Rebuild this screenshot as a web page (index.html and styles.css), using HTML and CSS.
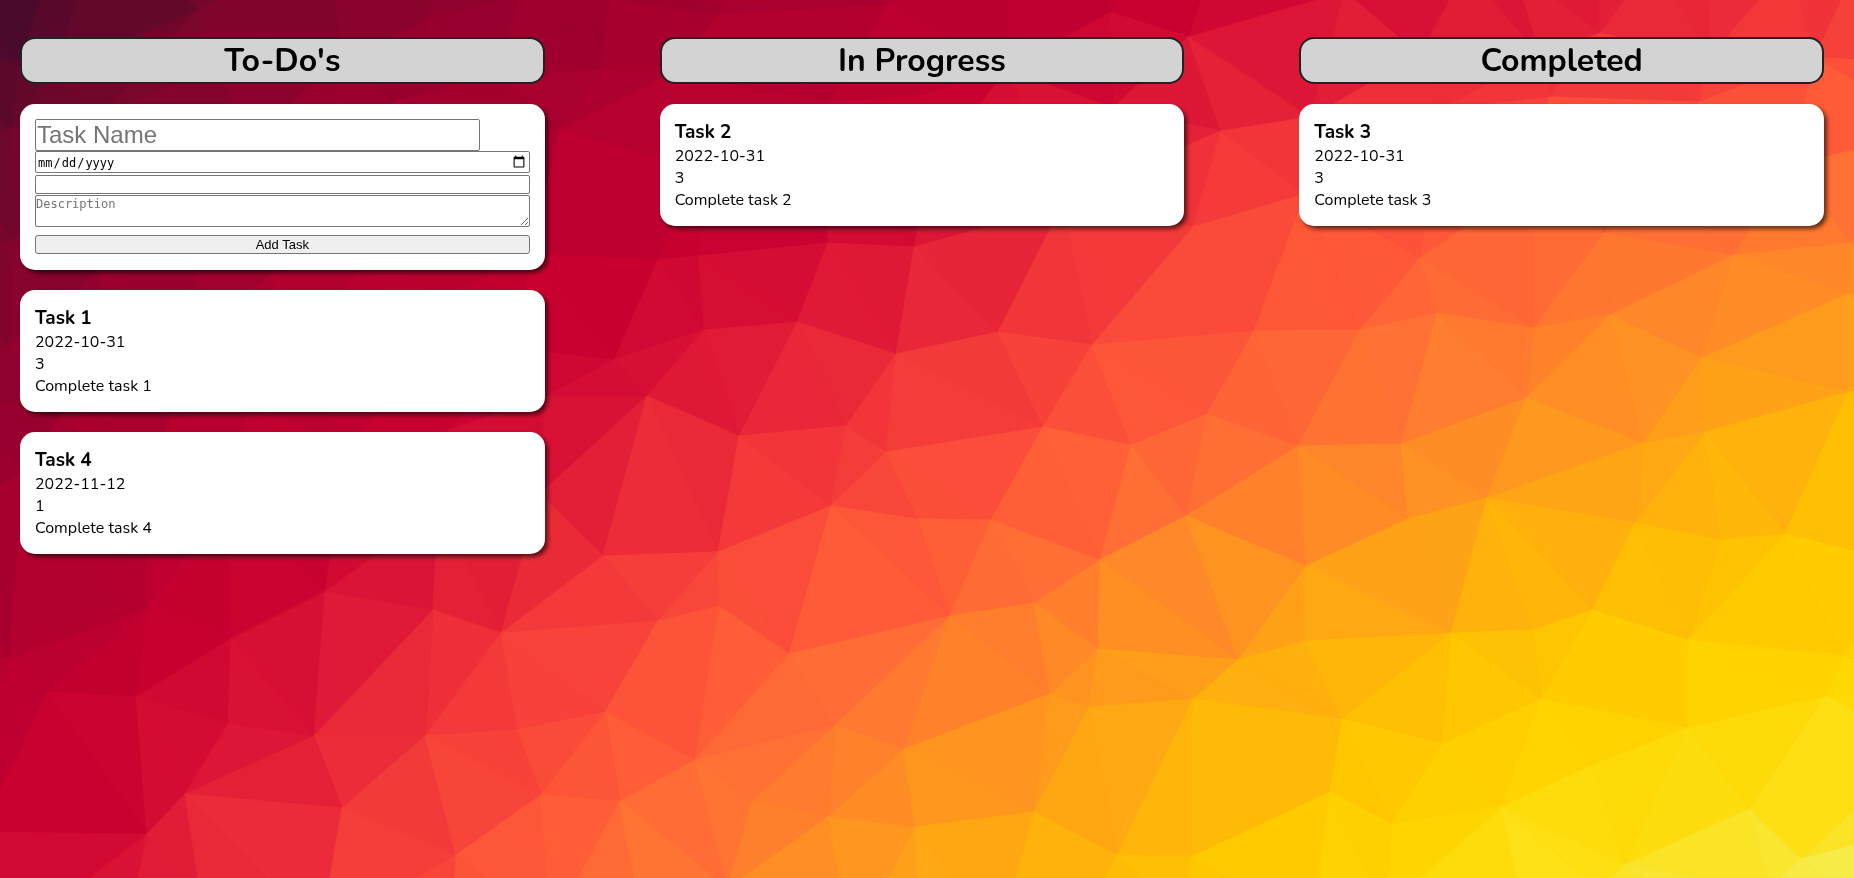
FILE: index.html
```html
<!DOCTYPE html>
<html lang="en">
<head>
<meta charset="utf-8">
<title>Task Board</title>
<link rel="stylesheet" href="styles.css">
</head>
<body>
<svg class="backdrop" id="backdrop" viewBox="0 0 1854 878" preserveAspectRatio="xMidYMid slice" aria-hidden="true"></svg>
<main class="board">
  <section class="column">
    <h2 class="column-title">To-Do's</h2>
    <form class="card task-form">
      <input class="field field-name" type="text" placeholder="Task Name" aria-label="Task name">
      <input class="field field-date" type="date" aria-label="Due date">
      <input class="field field-number" type="number" aria-label="Priority">
      <textarea class="field field-description" placeholder="Description" aria-label="Description"></textarea>
      <button class="add-button" type="button">Add Task</button>
    </form>
    <article class="card">
      <h3 class="task-name">Task 1</h3>
      <p class="task-line">2022-10-31</p>
      <p class="task-line">3</p>
      <p class="task-line">Complete task 1</p>
    </article>
    <article class="card">
      <h3 class="task-name">Task 4</h3>
      <p class="task-line">2022-11-12</p>
      <p class="task-line">1</p>
      <p class="task-line">Complete task 4</p>
    </article>
  </section>
  <section class="column">
    <h2 class="column-title">In Progress</h2>
    <article class="card">
      <h3 class="task-name">Task 2</h3>
      <p class="task-line">2022-10-31</p>
      <p class="task-line">3</p>
      <p class="task-line">Complete task 2</p>
    </article>
  </section>
  <section class="column">
    <h2 class="column-title">Completed</h2>
    <article class="card">
      <h3 class="task-name">Task 3</h3>
      <p class="task-line">2022-10-31</p>
      <p class="task-line">3</p>
      <p class="task-line">Complete task 3</p>
    </article>
  </section>
</main>
<script src="backdrop.js"></script>
</body>
</html>
```
FILE: styles.css
```css
* {
  box-sizing: border-box;
  margin: 0;
  padding: 0;
}

body {
  min-height: 100vh;
  background: #c00031;
  color: #000;
  font-family: Nunito, Lato, "Open Sans", sans-serif;
  font-size: 16px;
}

.backdrop {
  position: fixed;
  inset: 0;
  width: 100%;
  height: 100%;
  z-index: -1;
}

.board {
  display: grid;
  grid-template-columns: repeat(3, 1fr);
  column-gap: 115px;
  align-items: start;
  padding: 37px 30px 20px 20px;
}

.column {
  display: flex;
  flex-direction: column;
  gap: 20px;
}

.column-title {
  border: 2px solid #222;
  border-radius: 15px;
  background: #d3d3d3;
  font-size: 32px;
  font-weight: 700;
  line-height: 43px;
  text-align: center;
}

.card {
  padding: 15px;
  border-radius: 15px;
  background: #fff;
  box-shadow: 3px 3px 4px rgba(0, 0, 0, 0.6);
}

.task-name {
  font-size: 19px;
  font-weight: 700;
  line-height: 26px;
}

.task-line {
  line-height: 22px;
}

.task-form {
  display: flex;
  flex-direction: column;
}

.field {
  width: 100%;
  border: 1px solid #767676;
  border-radius: 2px;
  background: #fff;
  font-family: "Liberation Sans", Arial, sans-serif;
  font-size: 13px;
}

.field::placeholder {
  color: #757575;
}

.field-name {
  width: 90%;
  height: 32px;
  padding: 1px;
  font-size: 24px;
}

.field-date {
  height: 22px;
  padding: 2px 1px 0;
  font-family: "DejaVu Sans Mono", monospace;
  font-size: 12px;
}

.field-date::-webkit-calendar-picker-indicator {
  width: 14px;
  height: 14px;
  margin-bottom: 2px;
}

.field-number {
  height: 19px;
  margin-top: 2px;
}

.field-description {
  height: 32px;
  margin-top: 1px;
  padding-top: 1px;
  font-family: "DejaVu Sans Mono", monospace;
  font-size: 12px;
  resize: both;
}

.add-button {
  height: 19px;
  margin: 8px 0 1px;
  border: 1px solid #767676;
  border-radius: 3px;
  background: #efefef;
  color: #000;
  font-family: "Liberation Sans", Arial, sans-serif;
  font-size: 13px;
  line-height: 15px;
}
```
FILE: backdrop.js
```js
// Low-poly backdrop: triangulates a set of points and shades each facet
// by its place on a colour ramp.
const points = [
  [-90,-70],[60,-60],[100,-70],[330,-50],[470,-60],[620,-50],[750,-60],[890,-80],[1010,-50],[1110,-70],[1220,-60],[1345,-8],[1465,-30],[1515,-30],[1595,-50],[1655,-40],[1710,-40],[1790,-35],[1850,-20],[1950,-60],
  [-80,50],[20,62],[52,75],[198,9],[425,20],[440,-40],[395,102],[520,-8],[610,0],[719,15],[888,5],[1110,12],[1188,37],[1350,-10],[1420,55],[1540,55],[1600,33],[1708,58],[1815,58],[1930,62],
  [-60,150],[12,128],[98,118],[215,65],[250,140],[340,60],[330,190],[500,75],[560,130],[600,70],[670,75],[700,170],[830,103],[825,175],[921,95],[1008,70],[930,165],[1062,206],[1113,108],[1130,170],[1221,131],[1193,227],[1310,117],[1305,194],[1440,110],[1430,200],[1549,97],[1535,180],[1700,102],[1650,190],[1790,165],[1940,130],
  [-70,260],[15,240],[100,270],[180,230],[270,275],[370,250],[440,300],[530,254],[658,260],[699,256],[828,243],[914,247],[1420,258],[1604,233],[1734,255],[1851,243],[1940,280],
  [10,345],[110,360],[210,330],[300,370],[400,380],[520,350],[614,360],[704,330],[797,322],[896,354],[998,332],[1092,345],[1254,331],[1360,330],[1437,313],[1534,328],[1610,315],[1702,358],[1848,294],[1930,380],
  [-70,390],[60,415],[170,420],[250,405],[350,450],[449,430],[545,397],[647,396],[739,436],[846,426],[886,452],[1043,427],[1131,445],[1207,414],[1298,446],[1401,444],[1526,398],[1643,443],[1705,432],[1848,392],
  [-60,530],[25,470],[147,505],[228,500],[340,490],[438,510],[540,494],[603,556],[718,552],[831,506],[918,519],[991,520],[1100,560],[1186,516],[1306,566],[1408,519],[1487,498],[1635,523],[1721,540],[1785,534],[1910,565],
  [-60,645],[9,660],[147,609],[231,639],[325,592],[433,610],[501,633],[658,621],[719,606],[789,654],[950,616],[1034,603],[1098,649],[1238,660],[1305,641],[1451,633],[1532,630],[1592,610],[1688,640],[1844,656],[1940,690],
  [47,692],[136,697],[228,724],[314,736],[425,736],[517,730],[605,712],[695,760],[835,725],[904,749],[1050,694],[1089,707],[1193,699],[1342,719],[1442,744],[1541,699],[1592,765],[1688,728],[1826,696],[1920,750],
  [-20,832],[147,834],[185,794],[342,808],[456,855],[541,795],[620,801],[752,801],[828,817],[915,827],[1034,812],[1117,855],[1191,857],[1330,792],[1392,824],[1501,807],[1625,865],[1749,809],[1801,859],[1930,825],
  [20,930],[125,940],[210,960],[320,935],[450,950],[550,930],[645,940],[728,888],[850,940],[870,915],[920,950],[1000,935],[1085,910],[1192,930],[1310,930],[1385,910],[1530,940],[1600,890],[1745,940],[1770,890],[1900,940]
];

const ramp = [
  "4a0a2b", "78062b", "98002e", "b4002f", "c80030", "dc1436", "ee2f39", "f8443a", "ff5a38",
  "ff7034", "ff8828", "ff9e1a", "ffb40a", "ffc800", "ffd600", "fde015", "f7eb4a"
].map(h => [0, 2, 4].map(i => parseInt(h.slice(i, i + 2), 16)));

// Ramp positions at an even grid over the canvas.
const grid = [
  [0, 1.3, 2.2, 3, 4.3, 5.1, 6.3],
  [1, 2.5, 3.6, 4.8, 7, 8.4, 9.6],
  [2, 3.6, 5.1, 6.8, 8.7, 10.6, 12.2],
  [3, 4.9, 7.2, 9.2, 11.4, 12.9, 13.9],
  [4.2, 6.2, 8.8, 11.3, 13, 15, 16]
];

function shade(x, y) {
  const gx = Math.min(5.999, Math.max(0, x / 309));
  const gy = Math.min(3.999, Math.max(0, y / 219.5));
  const i = Math.floor(gx), j = Math.floor(gy), u = gx - i, v = gy - j;
  const t = (grid[j][i] * (1 - u) + grid[j][i + 1] * u) * (1 - v) +
    (grid[j + 1][i] * (1 - u) + grid[j + 1][i + 1] * u) * v;
  const s = Math.min(15, Math.floor(t)), f = t - s;
  const c = ramp[s].map((a, k) => Math.round(a + (ramp[s + 1][k] - a) * f));
  return `rgb(${c.join(",")})`;
}

function circle(a, b, c, pts) {
  const [ax, ay] = pts[a], [bx, by] = pts[b], [cx, cy] = pts[c];
  const d = 2 * (ax * (by - cy) + bx * (cy - ay) + cx * (ay - by));
  const A = ax * ax + ay * ay, B = bx * bx + by * by, C = cx * cx + cy * cy;
  const x = (A * (by - cy) + B * (cy - ay) + C * (ay - by)) / d;
  const y = (A * (cx - bx) + B * (ax - cx) + C * (bx - ax)) / d;
  return { v: [a, b, c], x, y, r: (ax - x) ** 2 + (ay - y) ** 2 };
}

function triangulate(source) {
  const pts = source.concat([[-20000, -20000], [20000, -20000], [0, 30000]]);
  const n = source.length;
  let tris = [circle(n, n + 1, n + 2, pts)];
  for (let p = 0; p < n; p++) {
    const edges = new Map();
    tris = tris.filter(t => {
      if ((pts[p][0] - t.x) ** 2 + (pts[p][1] - t.y) ** 2 >= t.r) return true;
      for (const [a, b] of [[t.v[0], t.v[1]], [t.v[1], t.v[2]], [t.v[2], t.v[0]]]) {
        const key = Math.min(a, b) + "-" + Math.max(a, b);
        if (edges.has(key)) edges.delete(key); else edges.set(key, [a, b]);
      }
      return false;
    });
    for (const [a, b] of edges.values()) tris.push(circle(a, b, p, pts));
  }
  return tris.filter(t => t.v.every(i => i < n)).map(t => t.v.map(i => pts[i]));
}

const svg = document.getElementById("backdrop");
for (const t of triangulate(points)) {
  const facet = document.createElementNS("http://www.w3.org/2000/svg", "polygon");
  const fill = shade((t[0][0] + t[1][0] + t[2][0]) / 3, (t[0][1] + t[1][1] + t[2][1]) / 3);
  facet.setAttribute("points", t.map(p => p.join(",")).join(" "));
  facet.setAttribute("fill", fill);
  facet.setAttribute("stroke", fill);
  svg.appendChild(facet);
}
```
